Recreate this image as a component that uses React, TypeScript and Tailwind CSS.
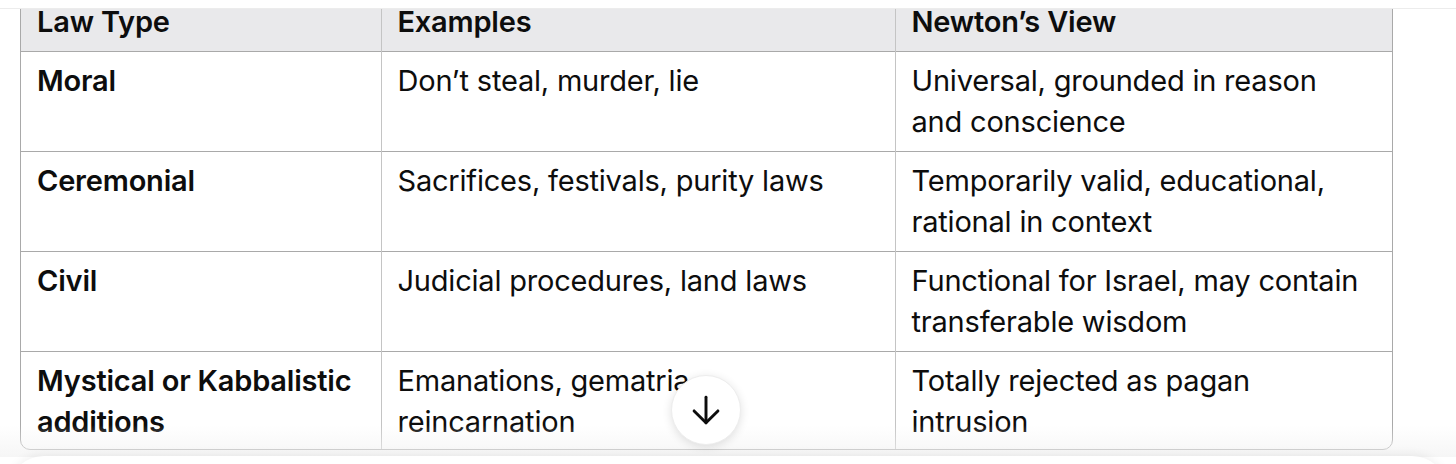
import React from 'react';

const rows = [
  { type: ['Moral'], examples: ['Don’t steal, murder, lie'], view: ['Universal, grounded in reason', 'and conscience'] },
  { type: ['Ceremonial'], examples: ['Sacrifices, festivals, purity laws'], view: ['Temporarily valid, educational,', 'rational in context'] },
  { type: ['Civil'], examples: ['Judicial procedures, land laws'], view: ['Functional for Israel, may contain', 'transferable wisdom'] },
  { type: ['Mystical or Kabbalistic', 'additions'], examples: ['Emanations, gematria,', 'reincarnation'], view: ['Totally rejected as pagan', 'intrusion'] },
];

function Lines({ lines }: { lines: string[] }) {
  return (
    <>
      {lines.map((l, i) => (
        <span key={i} className="block whitespace-nowrap">
          {l}
        </span>
      ))}
    </>
  );
}

export default function App() {
  return (
    <main
      className="relative w-[1456px] h-[464px] overflow-hidden bg-white text-[#0d0d0d]"
      style={{ fontFamily: 'Inter, "Noto Sans", sans-serif' }}
    >
      {/* top bar */}
      <div className="relative z-10 h-[9px] bg-white border-b border-[#ececec]" />

      <div className="-mt-[10px] ml-[20px] w-[1373px] border border-[#a9a9a9] rounded-b-[10px] overflow-hidden">
        <table className="w-full border-collapse text-[29px] leading-[41px] tracking-[-0.2px]">
          <colgroup>
            <col className="w-[360px]" />
            <col className="w-[514px]" />
            <col />
          </colgroup>
          <thead>
            <tr className="bg-[#e9e9eb] border-b border-[#a9a9a9]">
              <th className="text-left font-semibold px-4 pt-[1px] pb-[9px] align-top">Law Type</th>
              <th className="text-left font-semibold px-4 pt-[1px] pb-[9px] align-top border-l border-[#c4c4c4]">Examples</th>
              <th className="text-left font-semibold px-4 pt-[1px] pb-[9px] align-top border-l border-[#c4c4c4]">Newton’s View</th>
            </tr>
          </thead>
          <tbody>
            {rows.map((r, i) => {
              const last = i === rows.length - 1;
              return (
                <tr key={r.type[0]} className={last ? '' : 'border-b border-[#a9a9a9]'}>
                  <td className={`${last ? 'h-[97px] pb-[6px]' : 'h-[100px] pb-[8px]'} px-4 pt-[8px] align-top font-semibold`}>
                    <Lines lines={r.type} />
                  </td>
                  <td className="px-4 pt-[8px] align-top border-l border-[#c4c4c4]">
                    <Lines lines={r.examples} />
                  </td>
                  <td className="px-4 pt-[8px] align-top border-l border-[#c4c4c4]">
                    <Lines lines={r.view} />
                  </td>
                </tr>
              );
            })}
          </tbody>
        </table>
      </div>

      {/* fade at bottom */}
      <div className="pointer-events-none absolute left-0 right-0 top-[425px] h-[32px] bg-gradient-to-b from-white/0 to-[#f2f2f2]/70" />

      {/* composer edge */}
      <div className="absolute left-[8px] right-[8px] top-[456px] h-[40px] rounded-t-[36px] bg-white shadow-[0_-2px_10px_rgba(0,0,0,0.06)]" />

      {/* scroll to bottom button */}
      <button className="absolute left-[671px] top-[375px] w-[70px] h-[70px] rounded-full bg-white shadow-[0_2px_10px_rgba(0,0,0,0.12)] border border-[#ededed] flex items-center justify-center">
        <svg className="w-[44px] h-[44px]" viewBox="0 0 24 24" fill="none" stroke="#0d0d0d" strokeWidth="1.6" strokeLinecap="round" strokeLinejoin="round">
          <path d="M12 5v14" />
          <path d="M5.5 12.5l6.5 6.5 6.5-6.5" />
        </svg>
      </button>
    </main>
  );
}
